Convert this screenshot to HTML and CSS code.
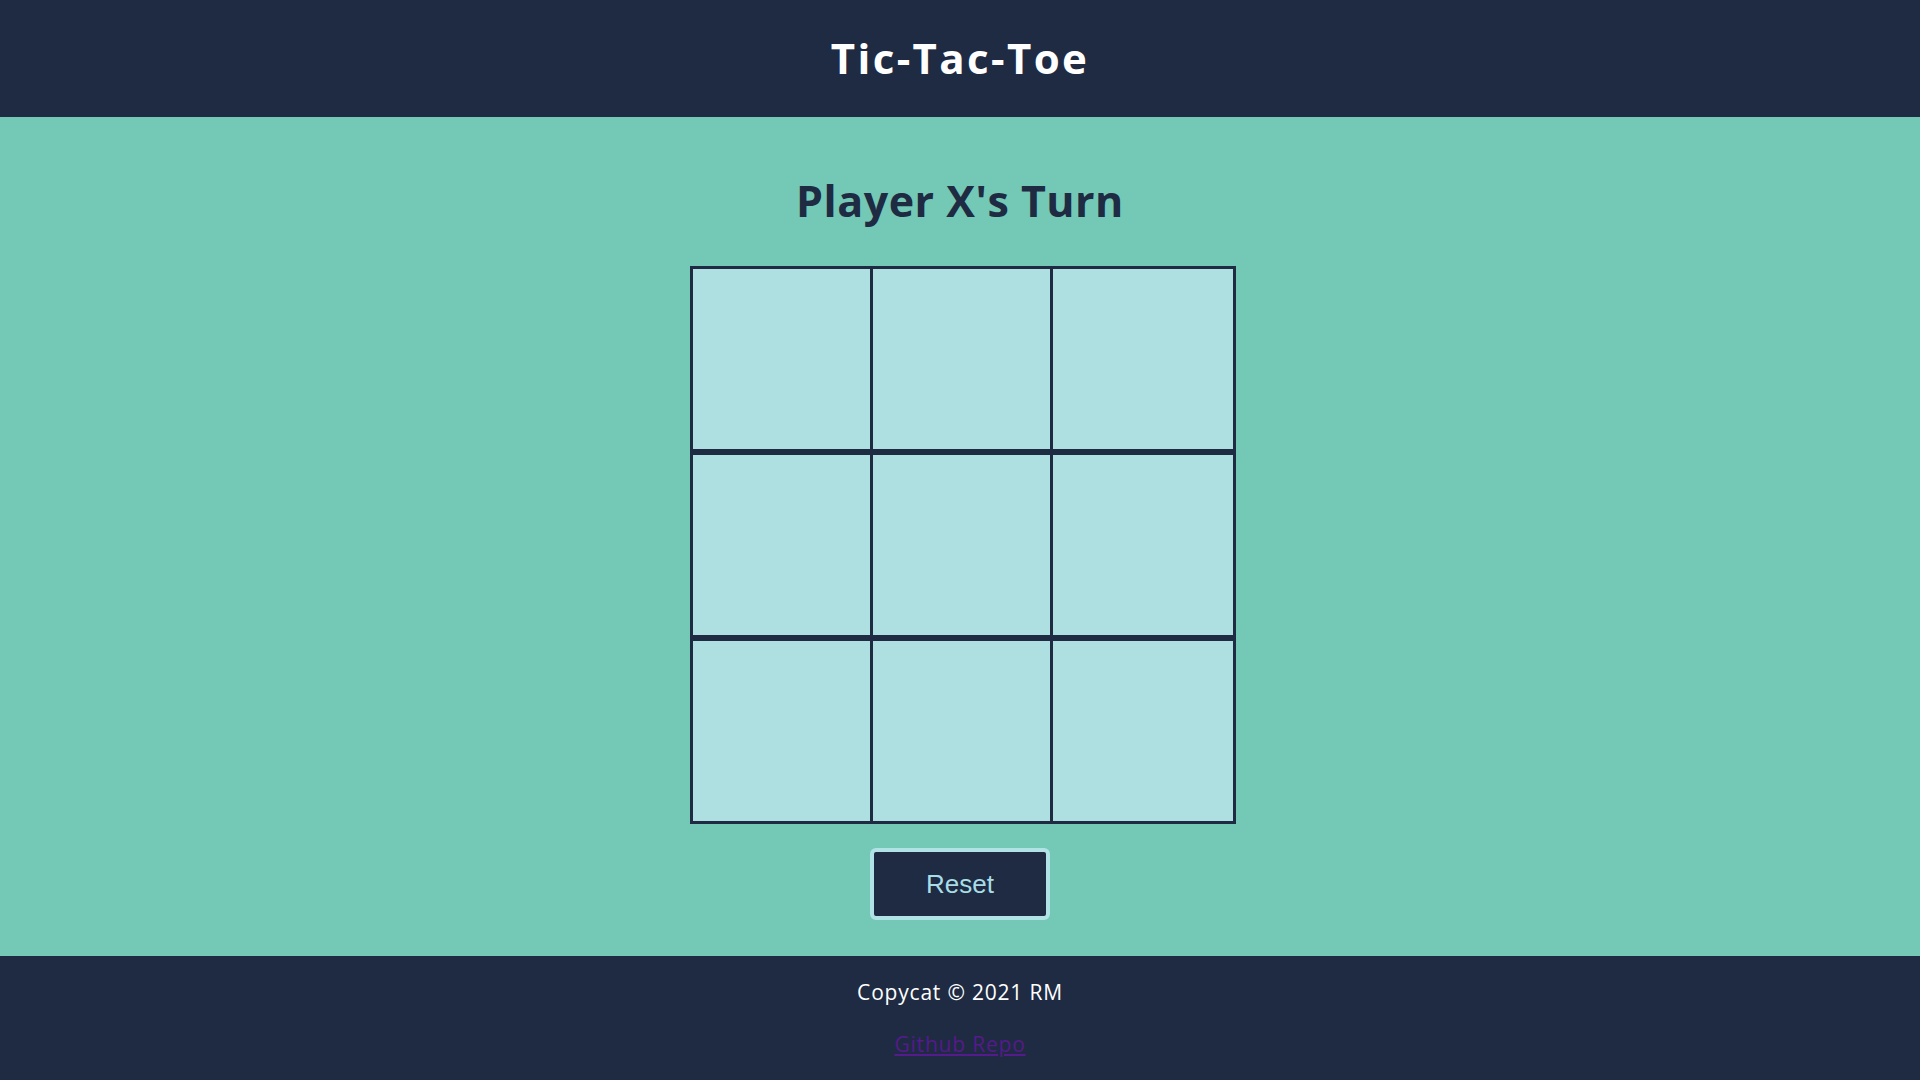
FILE: index.html
```html
<!DOCTYPE html>
<html lang="en">
<head>
<meta charset="utf-8">
<title>Tic-Tac-Toe</title>
<link rel="stylesheet" href="styles.css">
</head>
<body>
<header class="site-header">
  <h1 class="site-title">Tic-Tac-Toe</h1>
</header>
<main class="game">
  <h2 class="status">Player X's Turn</h2>
  <div class="board">
    <div class="row">
      <div class="cell"></div><div class="cell"></div><div class="cell"></div>
    </div>
    <div class="row">
      <div class="cell"></div><div class="cell"></div><div class="cell"></div>
    </div>
    <div class="row">
      <div class="cell"></div><div class="cell"></div><div class="cell"></div>
    </div>
  </div>
  <button class="reset" type="button">Reset</button>
</main>
<footer class="site-footer">
  <p class="copy">Copycat © 2021 RM</p>
  <a class="repo" href="#">Github Repo</a>
</footer>
</body>
</html>
```
FILE: styles.css
```css
html, body {
  margin: 0;
  padding: 0;
}
body {
  font-family: "Open Sans", Roboto, "Liberation Sans", sans-serif;
  background: #74c8b6;
}
.site-header {
  background: #1e2b43;
  height: 117px;
  box-sizing: border-box;
  padding-top: 33px;
}
.site-title {
  margin: 0;
  text-align: center;
  color: #ffffff;
  font-size: 42px;
  line-height: 50px;
  font-weight: 700;
  letter-spacing: 2.4px;
}
.game {
  display: flex;
  flex-direction: column;
  align-items: center;
  padding-top: 59px;
  padding-bottom: 36px;
  background: #74c8b6;
}
.status {
  margin: 0 0 40px;
  color: #1e2b43;
  font-size: 43px;
  line-height: 50px;
  font-weight: 700;
  letter-spacing: 0.5px;
}
.board {
  width: 540px;
  display: flex;
  flex-direction: column;
  align-items: flex-start;
}
.row {
  display: flex;
  flex: none;
  border: 3px solid #1e2b43;
}
.cell {
  width: 177px;
  height: 180px;
  flex: none;
  background: #aee0e1;
}
.cell + .cell {
  border-left: 3px solid #1e2b43;
}
.cell:last-child {
  width: 180px;
}
.reset {
  margin-top: 24px;
  width: 180px;
  height: 72px;
  box-sizing: border-box;
  border: 4px solid #b0e2e6;
  border-radius: 6px;
  background: #1e2b43;
  color: #a8dde6;
  font-family: "Liberation Sans", Arial, sans-serif;
  font-size: 26px;
  cursor: pointer;
}
.site-footer {
  background: #1e2b43;
  height: 124px;
  box-sizing: border-box;
  padding-top: 24px;
  display: flex;
  flex-direction: column;
  align-items: center;
}
.copy {
  margin: 0 0 28px;
  color: #ffffff;
  font-size: 21px;
  line-height: 24px;
  letter-spacing: 0.8px;
}
.repo {
  color: #551a8b;
  font-size: 21px;
  line-height: 24px;
  letter-spacing: 0.8px;
}
```
